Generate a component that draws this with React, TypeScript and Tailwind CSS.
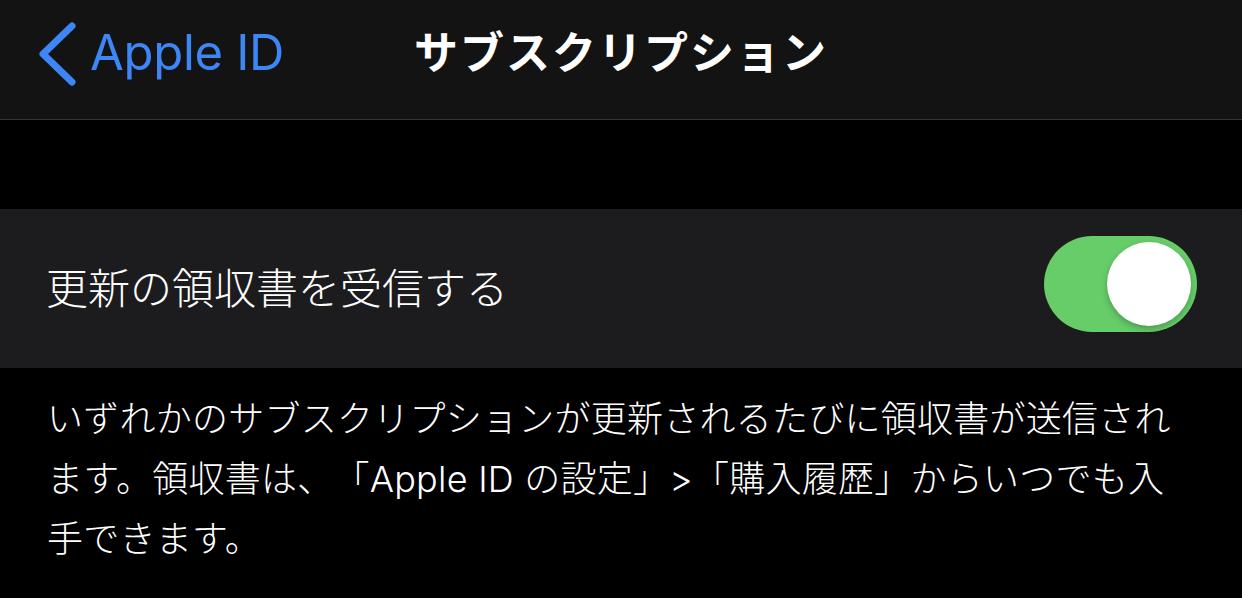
import React from "react";

const jp = "font-['Inter','Noto_Sans_CJK_JP',sans-serif]";

const App: React.FC = () => {
  return (
    <div className={`w-[1242px] h-[598px] bg-black text-white overflow-hidden ${jp}`}>
      {/* Nav bar */}
      <div className="relative h-[120px] bg-[#131313] border-b border-[#343434] flex items-start pt-[22px]">
        <div className="flex items-center gap-[12px] pl-[38px] text-[#3d86f5]">
          <svg width="40" height="64" viewBox="0 0 40 64" fill="none">
            <path
              d="M34 4 L5 32 L34 60"
              stroke="currentColor"
              strokeWidth="7"
              strokeLinecap="round"
              strokeLinejoin="round"
            />
          </svg>
          <span className="text-[49px] leading-[62px] tracking-[-0.3px] -mt-[2px]">Apple ID</span>
        </div>
        <div className="absolute left-0 right-0 top-[22px] flex justify-center">
          <span className="text-[44px] leading-[62px] font-bold tracking-[2px]">サブスクリプション</span>
        </div>
      </div>

      {/* Spacer */}
      <div className="h-[89px]" />

      {/* Toggle row */}
      <div className="h-[159px] bg-[#1c1c1e] flex items-center justify-between pl-[46px] pr-[45px]">
        <span className="text-[42px] leading-none font-light">更新の領収書を受信する</span>
        <div className="w-[153px] h-[96px] mb-[9px] rounded-full bg-[#66cd69] flex items-center justify-end pr-[6px]">
          <div className="w-[84px] h-[84px] rounded-full bg-white shadow-[0_3px_6px_rgba(0,0,0,0.25)]" />
        </div>
      </div>

      {/* Footer text */}
      <div className="pt-[21px] pl-[47px] pr-[20px] text-[36px] leading-[60px] tracking-[0.25px] font-light whitespace-nowrap [text-spacing-trim:space-all]">
        いずれかのサブスクリプションが更新されるたびに領収書が送信され
        <br />
        ます。領収書は、「Apple ID の設定」&gt;「購入履歴」からいつでも入
        <br />
        手できます。
      </div>
    </div>
  );
};

export default App;
